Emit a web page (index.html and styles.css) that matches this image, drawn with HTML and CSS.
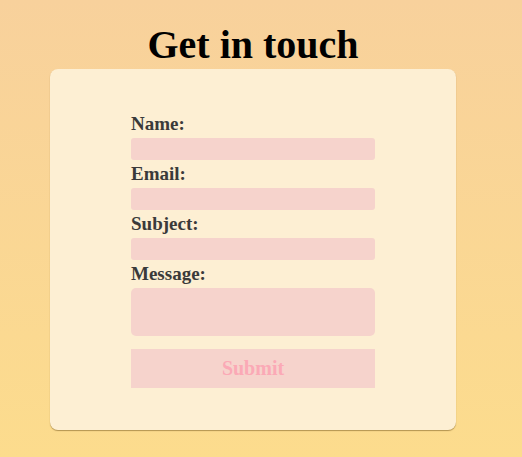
FILE: index.html
```html
<!DOCTYPE html>
<html lang="en">
<head>
<meta charset="utf-8">
<title>Get in touch</title>
<link rel="stylesheet" href="styles.css">
</head>
<body>
<main class="page">
  <h1 class="title">Get in touch</h1>
  <section class="card">
    <form class="form">
      <label class="label" for="name">Name:</label>
      <input class="field" id="name" type="text">
      <label class="label" for="email">Email:</label>
      <input class="field" id="email" type="email">
      <label class="label" for="subject">Subject:</label>
      <input class="field" id="subject" type="text">
      <label class="label" for="message">Message:</label>
      <textarea class="field area" id="message"></textarea>
      <button class="submit" type="button">Submit</button>
    </form>
  </section>
</main>
</body>
</html>
```
FILE: styles.css
```css
html, body {
  margin: 0;
  height: 100%;
}
body {
  background: linear-gradient(180deg, #f8d19c 0%, #fcdc8d 100%);
  font-family: "Liberation Serif", serif;
}
.page {
  width: 506px;
  display: flex;
  flex-direction: column;
  align-items: center;
  padding-top: 22px;
}
.title {
  margin: 0 0 1px;
  font-size: 40px;
  line-height: 46px;
  font-weight: bold;
  color: #000;
}
.card {
  width: 406px;
  box-sizing: border-box;
  padding: 43px 0 42px;
  background: #fdefd3;
  border-radius: 8px;
  box-shadow: 0 1px 1px rgba(120, 90, 30, 0.55);
  display: flex;
  justify-content: center;
}
.form {
  width: 244px;
  display: flex;
  flex-direction: column;
}
.label {
  font-size: 19px;
  line-height: 24px;
  font-weight: bold;
  color: #3a3a3a;
  margin-bottom: 2px;
}
.field {
  display: block;
  height: 22px;
  margin: 0 0 2px;
  padding: 0;
  border: none;
  border-radius: 3px;
  background: #f6d3cc;
  font-family: inherit;
  box-sizing: border-box;
}
.area {
  height: 48px;
  resize: none;
  border-radius: 5px;
}
.submit {
  margin-top: 11px;
  height: 39px;
  border: none;
  border-radius: 0;
  background: #f6d3cc;
  color: #fba9b6;
  font-family: inherit;
  font-size: 20px;
  font-weight: bold;
  padding: 0;
}
```
